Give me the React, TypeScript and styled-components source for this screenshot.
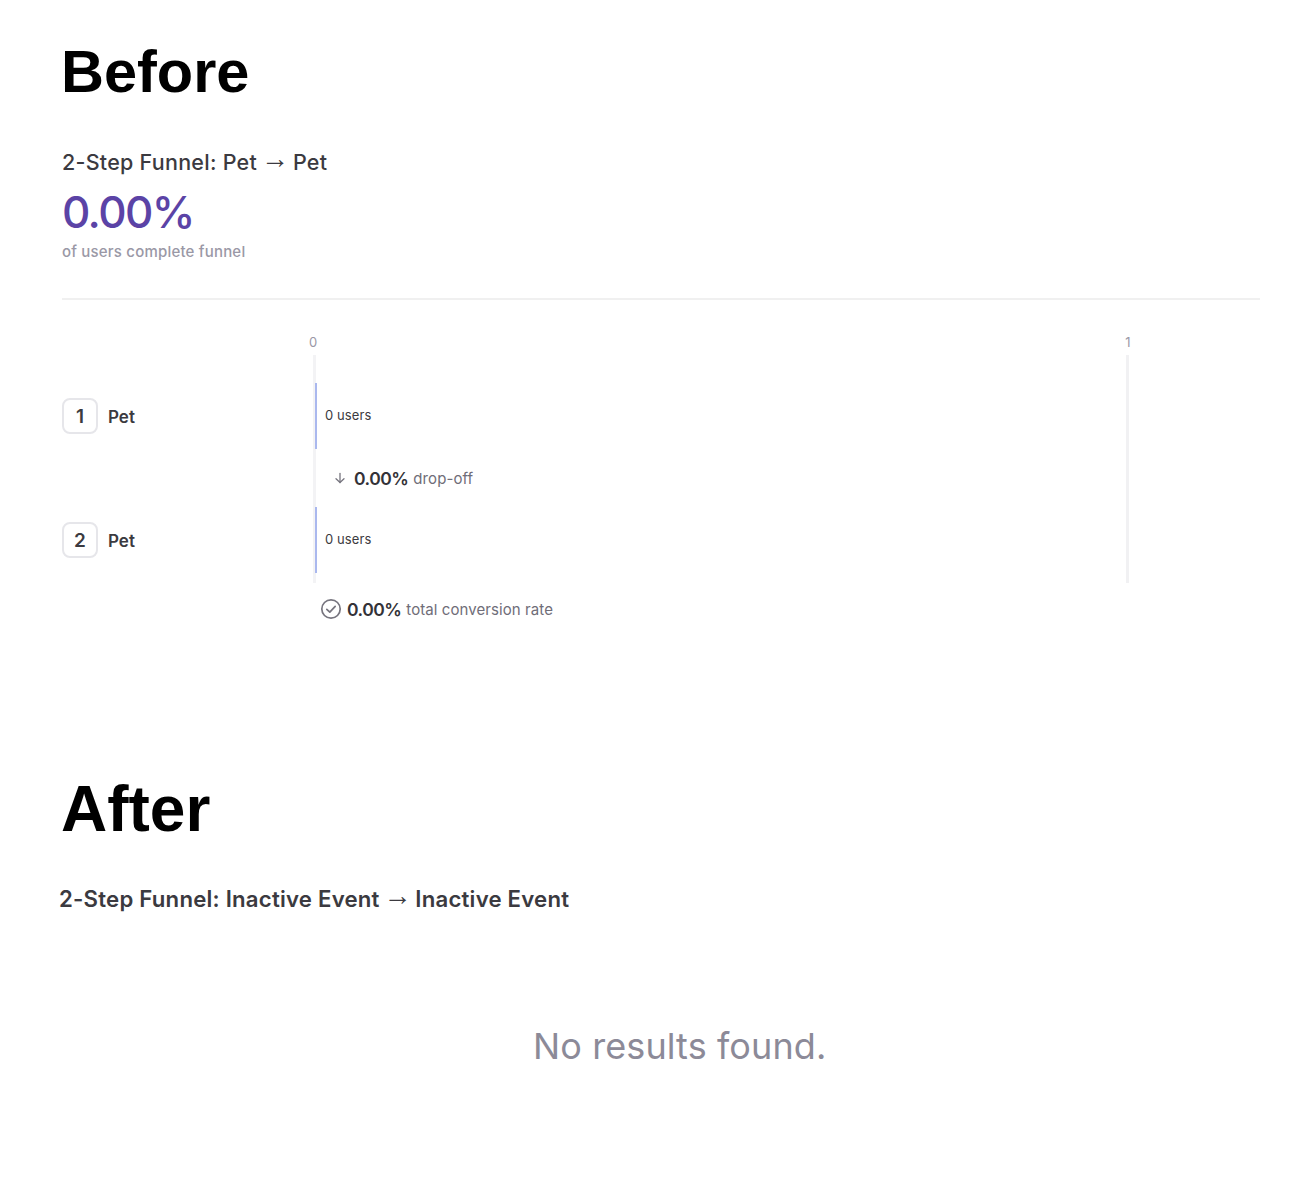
import { styled, createGlobalStyle } from "styled-components";

const GlobalStyle = createGlobalStyle`
    html, body {
        margin: 0;
        padding: 0;
        background-color: #ffffff;
    }

    body {
        font-family: "Inter", "Liberation Sans", sans-serif;
    }
`;

const steps = [
    { id: 1, name: "Pet", users: "0 users" },
    { id: 2, name: "Pet", users: "0 users" },
];

const App = () => {
    return (
        <>
            <GlobalStyle />
            <Page>
                <SectionHeading>Before</SectionHeading>
                <FunnelTitle>2-Step Funnel: Pet <ArrowGlyph>→</ArrowGlyph> Pet</FunnelTitle>
                <BigRate>0.00%</BigRate>
                <RateCaption>of users complete funnel</RateCaption>
                <Divider />

                <AxisRow>
                    <AxisTick>0</AxisTick>
                    <AxisTick>1</AxisTick>
                </AxisRow>

                <Chart>
                    <StepLabels>
                        {steps.map((step) => (
                            <StepLabel key={step.id}>
                                <StepBadge>{step.id}</StepBadge>
                                <StepName>{step.name}</StepName>
                            </StepLabel>
                        ))}
                    </StepLabels>
                    <Plot>
                        <Bar>
                            <BarText>{steps[0].users}</BarText>
                        </Bar>
                        <DropOff>
                            <DropIcon width="12" height="12" viewBox="0 0 12 12" fill="none" stroke="#77757f" strokeWidth="1.3" strokeLinecap="round" strokeLinejoin="round">
                                <path d="M6 1.5V10.5" />
                                <path d="M2 6.8L6 10.5L10 6.8" />
                            </DropIcon>
                            <Strong>0.00%</Strong>
                            <Muted>drop-off</Muted>
                        </DropOff>
                        <Bar>
                            <BarText>{steps[1].users}</BarText>
                        </Bar>
                    </Plot>
                </Chart>

                <TotalRow>
                    <svg width="22" height="22" viewBox="0 0 22 22" fill="none" stroke="#77757f" strokeWidth="1.7" strokeLinecap="round" strokeLinejoin="round">
                        <circle cx="11" cy="11" r="9.2" />
                        <path d="M6.8 11.3L9.8 14.2L15.2 8.4" />
                    </svg>
                    <Strong>0.00%</Strong>
                    <Muted>total conversion rate</Muted>
                </TotalRow>

                <SectionHeading $after>After</SectionHeading>
                <AfterTitle>2-Step Funnel: Inactive Event <ArrowGlyph>→</ArrowGlyph> Inactive Event</AfterTitle>
                <EmptyState>No results found.</EmptyState>
            </Page>
        </>
    );
};

const Page = styled.div`
    width: 1300px;
    height: 1190px;
    padding: 0 40px 0 62px;
    box-sizing: border-box;
    overflow: hidden;
`;

const SectionHeading = styled.h1<{ $after?: boolean }>`
    margin: ${(p) => (p.$after ? "154px 0 0 -1px" : "38px 0 0 -1px")};
    font-family: "Liberation Sans", Arial, sans-serif;
    font-size: ${(p) => (p.$after ? "64px" : "59.5px")};
    line-height: 68px;
    font-weight: bold;
    color: #000000;
`;

const FunnelTitle = styled.div`
    margin-top: 39px;
    height: 30px;
    font-size: 21.5px;
    line-height: 30px;
    font-weight: 500;
    letter-spacing: 0.25px;
    color: #3b3a40;
`;

const ArrowGlyph = styled.span`
    margin: 0 -2px;
    font-family: "Liberation Sans", Arial, sans-serif;
    font-size: 28px;
    line-height: 1;
    letter-spacing: 0;
    vertical-align: 2px;
`;

const AfterTitle = styled(FunnelTitle)`
    margin-top: 39px;
    margin-left: -3px;
    font-size: 22.2px;
    font-weight: 600;
    letter-spacing: 0.22px;
`;

const BigRate = styled.div`
    margin-top: 13px;
    font-size: 44px;
    line-height: 48px;
    font-weight: 500;
    letter-spacing: -1.6px;
    color: #5b43a6;
`;

const RateCaption = styled.div`
    margin-top: 6px;
    font-size: 15px;
    line-height: 20px;
    font-weight: 500;
    letter-spacing: 0.2px;
    color: #9a98a6;
`;

const Divider = styled.div`
    margin-top: 36px;
    height: 2px;
    background-color: #f0f0f0;
`;

const AxisRow = styled.div`
    margin: 33px 0 0 245px;
    width: 827px;
    display: flex;
    justify-content: space-between;
`;

const AxisTick = styled.span`
    width: 12px;
    text-align: center;
    font-size: 13px;
    line-height: 18px;
    color: #9a98a6;
`;

const Chart = styled.div`
    margin-top: 4px;
    display: flex;
`;

const StepLabels = styled.div`
    width: 251px;
    padding-top: 28px;
    display: flex;
    flex-direction: column;
    gap: 58px;
`;

const StepLabel = styled.div`
    height: 66px;
    display: flex;
    align-items: center;
    gap: 10px;
`;

const StepBadge = styled.div`
    width: 36px;
    height: 36px;
    box-sizing: border-box;
    border: 2px solid #e6e6ea;
    border-radius: 8px;
    display: flex;
    align-items: center;
    justify-content: center;
    font-size: 19px;
    font-weight: 600;
    color: #3b3a40;
`;

const StepName = styled.span`
    padding-top: 2px;
    font-size: 17px;
    font-weight: 600;
    color: #3b3a40;
`;

const Plot = styled.div`
    width: 816px;
    height: 228px;
    box-sizing: border-box;
    padding-top: 28px;
    border-left: 3px solid #f3f3f5;
    border-right: 3px solid #f1f1f3;
`;

const Bar = styled.div`
    height: 66px;
    box-sizing: border-box;
    margin-left: -1px;
    border-left: 2px solid #aab8ee;
    padding-left: 8px;
    padding-bottom: 2px;
    display: flex;
    align-items: center;
`;

const BarText = styled.span`
    font-size: 13px;
    font-weight: 400;
    letter-spacing: 0.1px;
    color: #3b3a40;
`;

const DropOff = styled.div`
    height: 58px;
    padding-left: 18px;
    display: flex;
    align-items: center;
    gap: 5px;
`;

const DropIcon = styled.svg`
    margin-right: 3px;
`;

const Strong = styled.span`
    font-size: 17.5px;
    font-weight: 600;
    letter-spacing: -0.5px;
    color: #333238;
`;

const Muted = styled.span`
    font-size: 15px;
    letter-spacing: 0.08px;
    color: #6f6d78;
`;

const TotalRow = styled.div`
    margin: 14px 0 0 258px;
    height: 24px;
    display: flex;
    align-items: center;
    gap: 5px;
`;

const EmptyState = styled.div`
    margin-top: 112px;
    padding-left: 471px;
    font-size: 36px;
    line-height: 44px;
    letter-spacing: 0.1px;
    color: #8c8a98;
`;

export default App;
